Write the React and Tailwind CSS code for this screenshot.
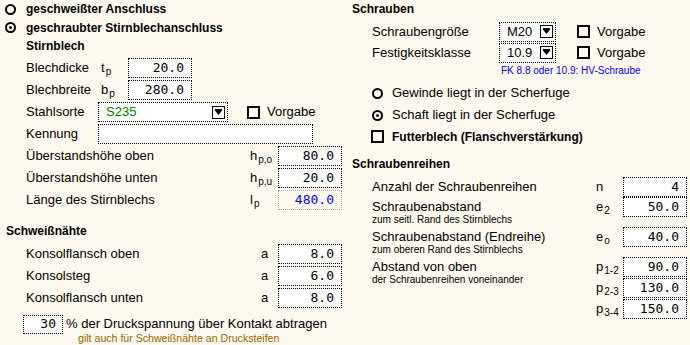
import React from "react";

const Radio = ({ checked }) => (
  <span className="w-[11px] h-[11px] rounded-full border-2 border-black flex items-center justify-center shrink-0">
    {checked && <span className="w-[3px] h-[3px] rounded-full bg-black" />}
  </span>
);

const Check = () => <span className="block w-[13px] h-[13px] border-2 border-black shrink-0" />;

const Field = ({ value, grey }) => (
  <div
    className={`w-[64px] h-[20px] border border-dotted shrink-0 flex items-center justify-end pr-[7px] font-['DejaVu_Sans_Mono',monospace] text-[13px] ${
      grey ? "border-[#a8a8a8] text-[#0000ff]" : "border-black bg-white text-black"
    }`}
  >
    {value}
  </div>
);

const Arrow = () => (
  <svg width="13" height="13" viewBox="0 0 13 13" className="block shrink-0">
    <rect x="0.5" y="0.5" width="12" height="12" fill="white" stroke="black" />
    <rect x="3" y="3" width="7" height="1" fill="black" />
    <polygon points="2.5,4 10.5,4 6.5,9" fill="black" />
  </svg>
);

const Select = ({ value, w, green }) => (
  <div
    className={`${w} h-[20px] border border-dotted border-black bg-white flex items-center pl-[7px] pr-[2px] shrink-0`}
  >
    <span className={green ? "text-[#008000]" : "text-black"}>{value}</span>
    <span className="ml-auto">
      <Arrow />
    </span>
  </div>
);

const Sym = ({ base, sub, w }) => (
  <div className={`${w} h-[20px] flex items-center shrink-0`}>
    <span>{base}</span>
    {sub && <span className="text-[10px] relative top-[3px] ml-[1px]">{sub}</span>}
  </div>
);

export default function App() {
  return (
    <div className="w-[690px] h-[345px] bg-[#fdf9ee] flex overflow-hidden text-black text-[13px] font-['Liberation_Sans',Arial,sans-serif]">
      {/* LEFT */}
      <div className="w-[345px] flex flex-col">
        <div className="h-[18px] flex items-center pl-[5px] gap-[10px] font-bold text-[12px]">
          <Radio />
          <span>geschweißter Anschluss</span>
        </div>
        <div className="h-[19px] flex items-center pl-[5px] gap-[10px] font-bold text-[12px]">
          <Radio checked />
          <span>geschraubter Stirnblechanschluss</span>
        </div>
        <div className="h-[17px] flex items-center pl-[26px] font-bold text-[12px]">Stirnblech</div>

        <div className="mt-[3px] h-[22px] flex items-center pl-[26px]">
          <span className="w-[75px]">Blechdicke</span>
          <Sym base="t" sub="p" w="w-[27px]" />
          <Field value="20.0" />
        </div>
        <div className="h-[22px] flex items-center pl-[26px]">
          <span className="w-[75px]">Blechbreite</span>
          <Sym base="b" sub="p" w="w-[27px]" />
          <Field value="280.0" />
        </div>
        <div className="h-[22px] flex items-center pl-[26px]">
          <span className="w-[72px]">Stahlsorte</span>
          <Select value="S235" w="w-[130px]" green />
          <span className="ml-[19px]">
            <Check />
          </span>
          <span className="ml-[7px]">Vorgabe</span>
        </div>
        <div className="h-[22px] flex items-center pl-[26px]">
          <span className="w-[72px]">Kennung</span>
          <div className="w-[215px] h-[20px] border border-dotted border-black bg-white" />
        </div>
        <div className="h-[22px] flex items-center pl-[26px] pr-[3px]">
          <span className="flex-1">Überstandshöhe oben</span>
          <Sym base="h" sub="p,o" w="w-[28px]" />
          <Field value="80.0" />
        </div>
        <div className="h-[22px] flex items-center pl-[26px] pr-[3px]">
          <span className="flex-1">Überstandshöhe unten</span>
          <Sym base="h" sub="p,u" w="w-[28px]" />
          <Field value="20.0" />
        </div>
        <div className="h-[22px] flex items-center pl-[26px] pr-[3px]">
          <span className="flex-1">Länge des Stirnblechs</span>
          <Sym base="l" sub="p" w="w-[28px]" />
          <Field value="480.0" grey />
        </div>

        <div className="mt-[11px] h-[18px] flex items-center pl-[6px] font-bold text-[12px]">Schweißnähte</div>
        <div className="mt-[3px] h-[22px] flex items-center pl-[26px] pr-[3px]">
          <span className="flex-1">Konsolflansch oben</span>
          <Sym base="a" w="w-[17px]" />
          <Field value="8.0" />
        </div>
        <div className="h-[22px] flex items-center pl-[26px] pr-[3px]">
          <span className="flex-1">Konsolsteg</span>
          <Sym base="a" w="w-[17px]" />
          <Field value="6.0" />
        </div>
        <div className="h-[22px] flex items-center pl-[26px] pr-[3px]">
          <span className="flex-1">Konsolflansch unten</span>
          <Sym base="a" w="w-[17px]" />
          <Field value="8.0" />
        </div>

        <div className="mt-[5px] h-[20px] flex items-center pl-[23px]">
          <div className="w-[40px] h-[19px] border border-dotted border-black bg-white flex items-center justify-end pr-[6px] font-['DejaVu_Sans_Mono',monospace] text-[13px]">
            30
          </div>
          <span className="ml-[3px]">% der Druckspannung über Kontakt abtragen</span>
        </div>
        <div className="-mt-[2px] pl-[78px] text-[10.6px] leading-[12px] text-[#996600]">
          gilt auch für Schweißnähte an Drucksteifen
        </div>
      </div>

      {/* RIGHT */}
      <div className="w-[345px] flex flex-col">
        <div className="h-[18px] flex items-center pl-[7px] font-bold text-[12px]">Schrauben</div>
        <div className="mt-[3px] h-[21px] flex items-center pl-[27px]">
          <span className="w-[127px]">Schraubengröße</span>
          <Select value="M20" w="w-[57px]" />
          <span className="ml-[21px]">
            <Check />
          </span>
          <span className="ml-[7px]">Vorgabe</span>
        </div>
        <div className="h-[21px] flex items-center pl-[27px]">
          <span className="w-[127px]">Festigkeitsklasse</span>
          <Select value="10.9" w="w-[57px]" />
          <span className="ml-[21px]">
            <Check />
          </span>
          <span className="ml-[7px]">Vorgabe</span>
        </div>
        <div className="h-[15px] flex items-center pl-[156px] text-[10px] text-[#0000ff]">
          FK 8.8 oder 10.9: HV-Schraube
        </div>
        <div className="mt-[4px] h-[22px] flex items-center pl-[27px] gap-[9px]">
          <Radio />
          <span>Gewinde liegt in der Scherfuge</span>
        </div>
        <div className="h-[22px] flex items-center pl-[27px] gap-[9px]">
          <Radio checked />
          <span>Schaft liegt in der Scherfuge</span>
        </div>
        <div className="h-[21px] flex items-center pl-[26px] gap-[8px] font-bold text-[12px]">
          <Check />
          <span>Futterblech (Flanschverstärkung)</span>
        </div>

        <div className="mt-[8px] h-[18px] flex items-center pl-[7px] font-bold text-[12px]">Schraubenreihen</div>
        <div className="mt-[3px] h-[21px] flex items-center pl-[27px] pr-[3px]">
          <span className="flex-1">Anzahl der Schraubenreihen</span>
          <Sym base="n" w="w-[27px]" />
          <Field value="4" />
        </div>
        <div className="flex items-start pl-[27px] pr-[3px]">
          <div className="flex-1 flex flex-col">
            <div className="h-[20px] flex items-center">Schraubenabstand</div>
            <div className="-mt-[3px] text-[10px] leading-[11px]">zum seitl. Rand des Stirnblechs</div>
          </div>
          <Sym base="e" sub="2" w="w-[27px]" />
          <Field value="50.0" />
        </div>
        <div className="mt-[2px] flex items-start pl-[27px] pr-[3px]">
          <div className="flex-1 flex flex-col">
            <div className="h-[20px] flex items-center">Schraubenabstand (Endreihe)</div>
            <div className="-mt-[3px] text-[10px] leading-[11px]">zum oberen Rand des Stirnblechs</div>
          </div>
          <Sym base="e" sub="o" w="w-[27px]" />
          <Field value="40.0" />
        </div>
        <div className="mt-[2px] flex items-start pl-[27px] pr-[3px]">
          <div className="flex-1 flex flex-col">
            <div className="h-[20px] flex items-center">Abstand von oben</div>
            <div className="-mt-[3px] text-[10px] leading-[11px]">der Schraubenreihen voneinander</div>
          </div>
          <div className="flex flex-col gap-[1px]">
            <div className="flex">
              <Sym base="p" sub="1-2" w="w-[27px]" />
              <Field value="90.0" />
            </div>
            <div className="flex">
              <Sym base="p" sub="2-3" w="w-[27px]" />
              <Field value="130.0" />
            </div>
            <div className="flex">
              <Sym base="p" sub="3-4" w="w-[27px]" />
              <Field value="150.0" />
            </div>
          </div>
        </div>
      </div>
    </div>
  );
}
